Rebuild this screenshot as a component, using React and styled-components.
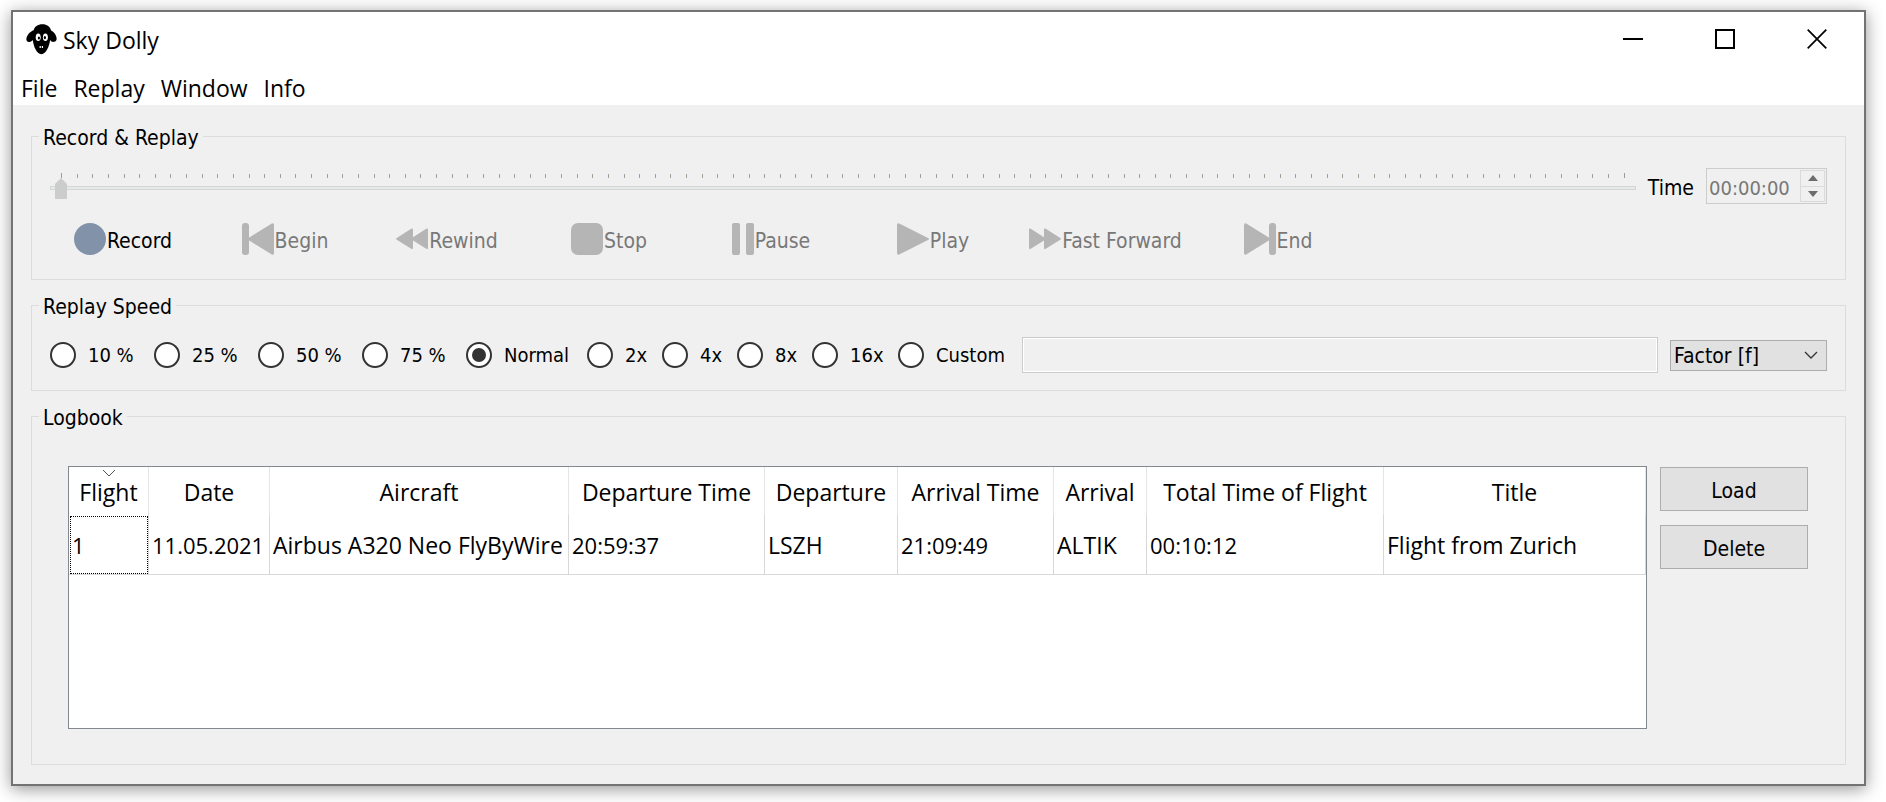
import React, { useState } from "react";
import styled, { createGlobalStyle, css } from "styled-components";

const uiFont = '"DejaVu Sans Condensed", "DejaVu Sans", sans-serif';
const systemFont = '"Open Sans", "Noto Sans", sans-serif';

const GlobalStyle = createGlobalStyle`
  *, *::before, *::after { box-sizing: border-box; }
  body { margin: 0; background: #fff; color: #000; }
  button, input, select { font: inherit; color: inherit; margin: 0; }
`;

/* Window frame */

const AppWindow = styled.main`
  margin: 10px 20px 16px 11px;
  border: 2px solid #737373;
  background: #f0f0f0;
  box-shadow: 0 3px 16px rgba(0, 0, 0, 0.42);
  font: 21px/26px ${uiFont};
`;

const TitleBar = styled.header`
  display: flex;
  align-items: center;
  height: 54px;
  padding: 0 1px 0 13px;
  background: #fff;
  font-family: ${systemFont};
`;

const Title = styled.h1`
  flex: 1;
  margin: 0;
  padding: 2px 0 0 5px;
  font-size: 23px;
  line-height: 32px;
  font-weight: 400;
`;

const WindowButton = styled.button`
  display: grid;
  place-items: center;
  width: 92px;
  height: 54px;
  padding: 0;
  border: 0;
  background: none;
`;

const MenuBar = styled.nav`
  display: flex;
  gap: 16px;
  height: 39px;
  padding: 5px 8px 0;
  background: #fff;
  font-family: ${systemFont};
`;

const MenuItem = styled.button`
  padding: 0;
  border: 0;
  background: none;
  font-size: 23px;
  line-height: 32px;
`;

/* Groups */

const Content = styled.div`
  display: flex;
  flex-direction: column;
  gap: 12px;
  padding: 18px 18px 19px;
`;

const Group = styled.fieldset`
  min-width: 0;
  margin: 0;
  padding: 0;
  border: 1px solid #dcdcdc;
`;

const Legend = styled.legend`
  margin-left: 7px;
  padding: 4px 4px 0;
  line-height: 22px;
`;

const GroupBody = styled.div`
  padding: ${(p) => (p.$roomy ? "37px 37px 35px 36px" : "19px 18px 17px")};
`;

/* Record & Replay */

const PositionRow = styled.div`
  display: flex;
  align-items: center;
  gap: 12px;
`;

const Timeline = styled.div`
  flex: 1;
  min-width: 0;
`;

const Ticks = styled.div`
  display: flex;
  justify-content: space-between;
  align-items: flex-end;
  height: 5px;
  padding: 0 10px 0 11px;
`;

const Tick = styled.span`
  width: 1px;
  height: 4px;
  background: #a5a294;

  &:first-child,
  &:last-child {
    height: 5px;
    background: #9a9a9a;
  }
`;

const Slider = styled.input`
  display: block;
  appearance: none;
  width: 100%;
  height: 21px;
  padding: 0 5px;
  background:
    linear-gradient(#d2d6d5, #d2d6d5) 0 8px / 1px 4px no-repeat,
    linear-gradient(#d2d6d5, #d2d6d5) 100% 8px / 1px 4px no-repeat,
    linear-gradient(#d2d6d5 1px, #e6eae9 1px 3px, #d2d6d5 3px) 0 8px / 100% 4px no-repeat;

  &::-webkit-slider-thumb {
    appearance: none;
    width: 12px;
    height: 21px;
    background: #ccc;
    clip-path: polygon(50% 0, 100% 6px, 100% 100%, 0 100%, 0 6px);
  }
`;

const TimeLabel = styled.label`
  padding-top: 3px;
`;

const SpinBox = styled.div`
  display: flex;
  width: 121px;
  height: 36px;
  padding: 1px;
  border: 1px solid #ccc;
`;

const SpinInput = styled.input`
  flex: 1;
  min-width: 0;
  padding: 3px 0 0 1px;
  border: 0;
  background: none;
  font-size: 20px;
  color: #787878;
`;

const SpinButtons = styled.div`
  display: flex;
  flex-direction: column;
  width: 25px;
  border: 1px solid #dadada;
`;

const SpinButton = styled.button`
  flex: 1;
  display: grid;
  place-items: center;
  padding: 0;
  border: 0;
  background: none;

  & + & {
    border-top: 1px solid #dadada;
  }
`;

const Transport = styled.div`
  display: flex;
  gap: 16px;
  padding: 19px 0 7px;
`;

const TransportButton = styled.button`
  display: flex;
  justify-content: center;
  align-items: center;
  gap: 1px;
  width: ${(p) => (p.$wide ? 167 : 146)}px;
  height: 32px;
  padding: 0;
  border: 0;
  background: none;
  white-space: nowrap;

  &:disabled {
    color: #787878;
  }

  svg {
    flex: none;
  }
`;

const TransportLabel = styled.span`
  padding-top: 4px;
`;

/* Replay speed */

const SpeedRow = styled.div`
  display: flex;
  align-items: center;
  gap: 12px;
`;

const SpeedOptions = styled.div`
  display: grid;
  grid-template-columns: repeat(4, 104px) 121px repeat(3, 75px) 86px 112px;
`;

const Option = styled.label`
  display: flex;
  align-items: center;
  gap: 12px;
  font-size: 20px;
  white-space: nowrap;
`;

const Radio = styled.input`
  appearance: none;
  display: grid;
  place-items: center;
  width: 26px;
  height: 26px;
  border: 2px solid #333;
  border-radius: 50%;
  background: #fff;

  &:checked::before {
    content: "";
    width: 14px;
    height: 14px;
    border-radius: 50%;
    background: #333;
  }
`;

const CustomSpeed = styled.input`
  flex: 1;
  min-width: 0;
  height: 36px;
  padding: 0 4px;
  border: 1px solid #ccc;
  background: #f0f0f0;
  box-shadow: inset 0 0 0 1px #fff;
`;

const SelectBox = styled.div`
  display: grid;
  align-items: center;
  width: 157px;
  height: 31px;

  > * {
    grid-area: 1 / 1;
  }

  svg {
    justify-self: end;
    margin-right: 9px;
    pointer-events: none;
  }
`;

const Select = styled.select`
  appearance: none;
  width: 100%;
  height: 31px;
  padding: 2px 3px 0;
  border: 1px solid #adadad;
  border-radius: 0;
  background: #e1e1e1;
`;

/* Logbook */

const LogbookRow = styled.div`
  display: flex;
  align-items: stretch;
  gap: 13px;
`;

const TableFrame = styled.div`
  flex: 1;
  min-width: 0;
  min-height: 263px;
  border: 1px solid #828790;
  background: #fff;
`;

const Table = styled.table`
  width: 100%;
  table-layout: fixed;
  border-collapse: separate;
  border-spacing: 0;
  font: 23px/32px ${systemFont};
  white-space: nowrap;
`;

const Column = styled.col`
  width: ${(p) => (p.$width ? `${p.$width}px` : "auto")};
`;

const HeaderCell = styled.th`
  position: relative;
  height: 48px;
  padding: 2px 0 0;
  border-right: 1px solid #e5e5e5;
  font-weight: 400;
`;

const SortMark = styled.svg`
  position: absolute;
  top: 2px;
  left: calc(50% - 7px);
`;

const Cell = styled.td`
  height: 60px;
  padding: 0 0 0 3px;
  border-right: 1px solid #d8d8d8;
  border-bottom: 1px solid #d8d8d8;
  ${(p) => p.$numeric && css`font-size: 22px;`}
  ${(p) => p.$current && css`
    outline: 1px dotted #000;
    outline-offset: -2px;
  `}
`;

const Actions = styled.div`
  display: flex;
  flex-direction: column;
  gap: 14px;
  width: 148px;
  padding-top: 1px;
`;

const PushButton = styled.button`
  height: 44px;
  padding: 3px 0 0;
  border: 1px solid #adadad;
  background: #e1e1e1;
`;

/* Drawings */

const SheepLogo = () => (
  <svg width="32" height="31" viewBox="0 0 32 31" aria-hidden="true">
    <path d="M16.5 0.3C11.5 .3 8.6 2.7 7.6 6.2 4 7.6 1 11 .4 14.5 0 17 1.6 18.3 3.5 18c1.5-.2 2.5-1 3.3-2C7.5 22 10.5 30.2 15.4 30.2S23.2 22 24.2 16c.8 1.5 2.3 2.2 3.8 1.8 2-.4 3-2 2.6-3.9C30 10.5 28 7.8 25.1 6.4 24 2.7 21 .3 16.5.3Z" />
    <ellipse cx="12.2" cy="13.3" rx="2.5" ry="3.8" fill="#fff" />
    <ellipse cx="19.4" cy="13.3" rx="2.5" ry="3.8" fill="#fff" />
    <ellipse cx="12.9" cy="14" rx="1.1" ry="1.6" />
    <ellipse cx="18.9" cy="13.6" rx="1.1" ry="1.6" />
    <path d="M14.2 22v2M16.4 22v2" stroke="#fff" strokeWidth="1.2" />
  </svg>
);

const grey = "#b5b5b5";

const icons = {
  record: <svg width="32" height="32"><circle cx="16" cy="16" r="16" fill="#8293a9" /></svg>,
  begin: (
    <svg width="32" height="32" fill={grey}>
      <rect width="7" height="32" rx="3" />
      <path d="M6 15.2 29.8.5Q32-.4 32 2v28q0 2.4-2.2 1.5L6 16.8Z" />
    </svg>
  ),
  rewind: (
    <svg width="32" height="32" fill={grey}>
      <path d="M.4 15.2 15.6 5.5Q17 5 17 6.5V14.2L30.6 5.5Q32 5 32 6.5V25Q32 26.5 30.6 26L17 17.4V25Q17 26.5 15.6 26L.4 16.4Q-.3 15.8.4 15.2Z" />
    </svg>
  ),
  stop: <svg width="32" height="32"><rect width="32" height="32" rx="7" fill={grey} /></svg>,
  pause: (
    <svg width="22" height="32" fill={grey}>
      <rect width="8" height="32" rx="2" />
      <rect x="14" width="8" height="32" rx="2" />
    </svg>
  ),
  play: <svg width="32" height="32"><path d="M0 2Q0-.4 2.2.5L31.5 15.2Q32.3 16 31.5 16.8L2.2 31.5Q0 32.4 0 30Z" fill={grey} /></svg>,
  forward: (
    <svg width="32" height="32" fill={grey}>
      <path d="M31.6 15.2 16.4 5.5Q15 5 15 6.5V14.2L1.4 5.5Q0 5 0 6.5V25Q0 26.5 1.4 26L15 17.4V25Q15 26.5 16.4 26L31.6 16.4Q32.3 15.8 31.6 15.2Z" />
    </svg>
  ),
  end: (
    <svg width="32" height="32" fill={grey}>
      <rect x="25" width="7" height="32" rx="3" />
      <path d="M26 15.2 2.2.5Q0-.4 0 2v28q0 2.4 2.2 1.5L26 16.8Z" />
    </svg>
  ),
};

const transport = [
  { icon: "record", label: "Record", enabled: true },
  { icon: "begin", label: "Begin" },
  { icon: "rewind", label: "Rewind" },
  { icon: "stop", label: "Stop" },
  { icon: "pause", label: "Pause" },
  { icon: "play", label: "Play" },
  { icon: "forward", label: "Fast Forward", wide: true },
  { icon: "end", label: "End" },
];

const speeds = ["10 %", "25 %", "50 %", "75 %", "Normal", "2x", "4x", "8x", "16x", "Custom"];

const columns = [
  { title: "Flight", width: 80, value: "1", numeric: true },
  { title: "Date", width: 121, value: "11.05.2021", numeric: true },
  { title: "Aircraft", width: 299, value: "Airbus A320 Neo FlyByWire" },
  { title: "Departure Time", width: 196, value: "20:59:37", numeric: true },
  { title: "Departure", width: 133, value: "LSZH" },
  { title: "Arrival Time", width: 156, value: "21:09:49", numeric: true },
  { title: "Arrival", width: 93, value: "ALTIK" },
  { title: "Total Time of Flight", width: 237, value: "00:10:12", numeric: true },
  { title: "Title", value: "Flight from Zurich" },
];

export default function App() {
  const [speed, setSpeed] = useState("Normal");

  return (
    <>
      <GlobalStyle />
      <AppWindow>
        <TitleBar>
          <SheepLogo />
          <Title>Sky Dolly</Title>
          <WindowButton aria-label="Minimize">
            <svg width="20" height="20"><path d="M0 10h20" stroke="#000" strokeWidth="2" /></svg>
          </WindowButton>
          <WindowButton aria-label="Maximize">
            <svg width="20" height="20"><path d="M1 1h18v18H1Z" fill="none" stroke="#000" strokeWidth="2" /></svg>
          </WindowButton>
          <WindowButton aria-label="Close">
            <svg width="20" height="20"><path d="m.7.7 18.6 18.6M19.3.7.7 19.3" stroke="#000" strokeWidth="1.7" /></svg>
          </WindowButton>
        </TitleBar>
        <MenuBar>
          {["File", "Replay", "Window", "Info"].map((name) => (
            <MenuItem key={name}>{name}</MenuItem>
          ))}
        </MenuBar>

        <Content>
          <Group>
            <Legend>Record &amp; Replay</Legend>
            <GroupBody>
              <PositionRow>
                <Timeline>
                  <Ticks>
                    {Array.from({ length: 101 }, (_, i) => <Tick key={i} />)}
                  </Ticks>
                  <Slider type="range" min="0" max="100" defaultValue="0" disabled aria-label="Position" />
                </Timeline>
                <TimeLabel htmlFor="time">Time</TimeLabel>
                <SpinBox>
                  <SpinInput id="time" defaultValue="00:00:00" disabled />
                  <SpinButtons>
                    <SpinButton disabled aria-label="Increase">
                      <svg width="10" height="6"><path d="M0 6 5 0l5 6Z" fill="#6d6d6d" /></svg>
                    </SpinButton>
                    <SpinButton disabled aria-label="Decrease">
                      <svg width="10" height="6"><path d="M0 0l5 6 5-6Z" fill="#6d6d6d" /></svg>
                    </SpinButton>
                  </SpinButtons>
                </SpinBox>
              </PositionRow>
              <Transport>
                {transport.map((b) => (
                  <TransportButton key={b.label} disabled={!b.enabled} $wide={b.wide}>
                    {icons[b.icon]}
                    <TransportLabel>{b.label}</TransportLabel>
                  </TransportButton>
                ))}
              </Transport>
            </GroupBody>
          </Group>

          <Group>
            <Legend>Replay Speed</Legend>
            <GroupBody>
              <SpeedRow>
                <SpeedOptions>
                  {speeds.map((name) => (
                    <Option key={name}>
                      <Radio type="radio" name="speed" checked={speed === name} onChange={() => setSpeed(name)} />
                      {name}
                    </Option>
                  ))}
                </SpeedOptions>
                <CustomSpeed disabled aria-label="Custom speed" />
                <SelectBox>
                  <Select aria-label="Speed unit">
                    <option>Factor [f]</option>
                  </Select>
                  <svg width="14" height="8"><path d="M1 1l6 6 6-6" fill="none" stroke="#333" strokeWidth="1.3" /></svg>
                </SelectBox>
              </SpeedRow>
            </GroupBody>
          </Group>

          <Group>
            <Legend>Logbook</Legend>
            <GroupBody $roomy>
              <LogbookRow>
                <TableFrame>
                  <Table>
                    <colgroup>
                      {columns.map((c) => <Column key={c.title} $width={c.width} />)}
                    </colgroup>
                    <thead>
                      <tr>
                        {columns.map((c, i) => (
                          <HeaderCell key={c.title} scope="col">
                            {i === 0 && (
                              <SortMark width="14" height="8">
                                <path d="M1 1l6 6 6-6" fill="none" stroke="#555" />
                              </SortMark>
                            )}
                            {c.title}
                          </HeaderCell>
                        ))}
                      </tr>
                    </thead>
                    <tbody>
                      <tr>
                        {columns.map((c, i) => (
                          <Cell key={c.title} $numeric={c.numeric} $current={i === 0}>{c.value}</Cell>
                        ))}
                      </tr>
                    </tbody>
                  </Table>
                </TableFrame>
                <Actions>
                  <PushButton>Load</PushButton>
                  <PushButton>Delete</PushButton>
                </Actions>
              </LogbookRow>
            </GroupBody>
          </Group>
        </Content>
      </AppWindow>
    </>
  );
}
